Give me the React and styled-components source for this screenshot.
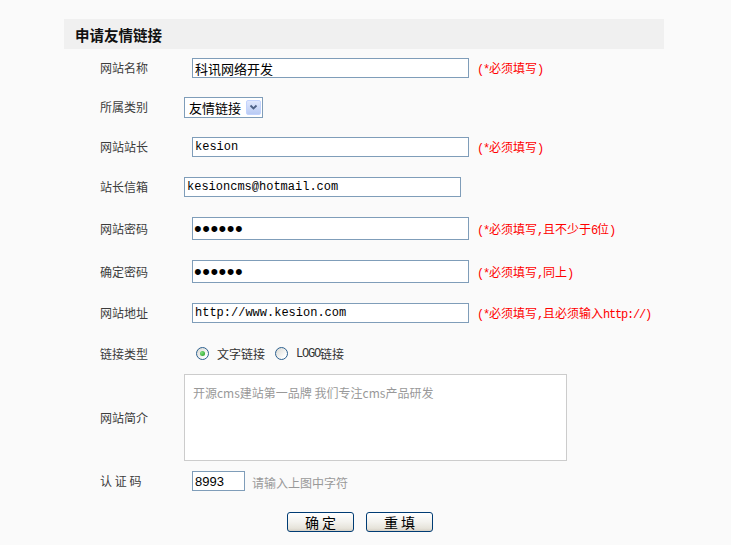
import React from "react";
import styled, { createGlobalStyle } from "styled-components";

const CJK = `"Noto Sans CJK SC", sans-serif`;
const SONG = `"Liberation Mono", "Noto Sans CJK SC", monospace`;

const GlobalStyle = createGlobalStyle`
  html, body {
    margin: 0;
    padding: 0;
    background: #fafafa;
  }
  body {
    font-family: ${CJK};
    font-size: 12px;
    color: #333;
  }
  * { box-sizing: border-box; }
`;

const Page = styled.div`
  padding: 19px 0 0 64px;
  min-height: 545px;
`;

const Panel = styled.div`
  width: 600px;
`;

const Header = styled.div`
  height: 30px;
  background: #f0f0f0;
  display: flex;
  align-items: center;
  padding-left: 11px;
  font-family: ${CJK};
  font-size: 14.5px;
  font-weight: bold;
  color: #111;
`;

const Form = styled.form`
  display: flex;
  flex-direction: column;
`;

const Row = styled.div`
  display: grid;
  grid-template-columns: 120px 1fr;
  align-items: center;
  min-height: ${(p) => p.$h || 40}px;
`;

const Label = styled.div`
  padding-left: 36px;
  font-family: ${CJK};
  font-size: 12px;
  line-height: 14px;
  color: #3c3c3c;
  white-space: pre;
`;

const Field = styled.div`
  display: flex;
  align-items: center;
`;

const TextInput = styled.input`
  width: ${(p) => p.$w || 277}px;
  height: ${(p) => p.$hgt || 20}px;
  margin: 0 0 0 ${(p) => (p.$indent ? 8 : 0)}px;
  padding: 0 2px;
  border: 1px solid #7f9db9;
  background: #fff;
  color: #000;
  font-family: ${(p) =>
    p.$mono ? SONG : p.$sans ? `"Liberation Sans", sans-serif` : CJK};
  font-size: ${(p) => p.$fs || 12}px;
  outline: none;
`;

const PasswordInput = styled(TextInput)`
  font-family: "Liberation Sans", sans-serif;
  font-size: 22px;
  padding: 0 1px;
  letter-spacing: 0.5px;
`;

const Hint = styled.span`
  margin-left: ${(p) => p.$ml ?? 8}px;
  padding-top: ${(p) => (p.$gray ? 3 : 2)}px;
  font-family: ${CJK};
  font-size: 12px;
  line-height: 14px;
  color: ${(p) => (p.$gray ? "#999" : "#f00")};
  white-space: nowrap;
`;

const Latin = styled.span`
  font-family: "Liberation Mono", monospace;
  font-size: 12px;
  letter-spacing: -1.2px;
`;

const SelectBox = styled.div`
  width: 79px;
  height: 21px;
  border: 1px solid #7f9db9;
  background: #fff;
  display: flex;
  align-items: center;
  justify-content: space-between;
  padding: 0 1px 0 4px;
  font-family: ${CJK};
  font-size: 13px;
  color: #000;
`;

const ArrowBtn = styled.span`
  width: 15px;
  height: 15px;
  border: 1px solid #c3d3fd;
  border-radius: 2px;
  background: linear-gradient(#e0e8fe, #b9cbf4);
  display: flex;
  align-items: center;
  justify-content: center;
`;

const RadioGroup = styled.div`
  display: flex;
  align-items: center;
  padding-left: 12px;
`;

const RadioItem = styled.label`
  display: flex;
  align-items: center;
  margin-right: 10px;
  font-family: ${CJK};
  font-size: 12px;
  line-height: 14px;
  color: #333;
`;

const RadioCircle = styled.span`
  width: 13px;
  height: 13px;
  border-radius: 50%;
  border: 1px solid #2b5f8f;
  background: linear-gradient(135deg, #d8d8d2, #ffffff 80%);
  display: flex;
  align-items: center;
  justify-content: center;
  margin-right: 8px;
`;

const RadioDot = styled.span`
  width: 5px;
  height: 5px;
  border-radius: 50%;
  background: radial-gradient(circle at 35% 35%, #7fe07f, #1c9a1c);
`;

const TextArea = styled.textarea`
  width: 383px;
  height: 87px;
  border: 1px solid #ccc;
  background: #fff;
  padding: 11px 8px;
  resize: none;
  font-family: ${CJK};
  font-size: 12px;
  line-height: 14px;
  color: #999;
  outline: none;
  &::placeholder {
    color: #999;
  }
`;

const Buttons = styled.div`
  display: flex;
  align-items: center;
  gap: 12px;
  padding-left: 223px;
  height: 41px;
`;

const Button = styled.button`
  width: 67px;
  height: 20px;
  padding: 0;
  border: 1px solid #003c74;
  border-radius: 3px;
  background: linear-gradient(#ffffff, #f3f2ee 50%, #e6e3da 85%, #d6d0c5);
  font-family: ${CJK};
  font-size: 14px;
  line-height: 16px;
  color: #000;
  white-space: pre;
  cursor: pointer;
`;

function Radio({ checked, children }) {
  return (
    <RadioItem>
      <RadioCircle>{checked && <RadioDot />}</RadioCircle>
      {children}
    </RadioItem>
  );
}

export default function App() {
  return (
    <>
      <GlobalStyle />
      <Page>
        <Panel>
          <Header>申请友情链接</Header>
          <Form onSubmit={(e) => e.preventDefault()}>
            <Row $h={38}>
              <Label>网站名称</Label>
              <Field>
                <TextInput $indent $fs={13} defaultValue="科讯网络开发" />
                <Hint><Latin>(*</Latin>必须填写<Latin>)</Latin></Hint>
              </Field>
            </Row>
            <Row>
              <Label>所属类别</Label>
              <Field>
                <SelectBox>
                  <span>友情链接</span>
                  <ArrowBtn>
                    <svg width="9" height="7" viewBox="0 0 9 7">
                      <path
                        d="M1.5 1.5 L4.5 4.5 L7.5 1.5"
                        fill="none"
                        stroke="#4d6185"
                        strokeWidth="1.8"
                      />
                    </svg>
                  </ArrowBtn>
                </SelectBox>
              </Field>
            </Row>
            <Row>
              <Label>网站站长</Label>
              <Field>
                <TextInput $indent $mono defaultValue="kesion" />
                <Hint><Latin>(*</Latin>必须填写<Latin>)</Latin></Hint>
              </Field>
            </Row>
            <Row>
              <Label>站长信箱</Label>
              <Field>
                <TextInput $mono defaultValue="kesioncms@hotmail.com" />
              </Field>
            </Row>
            <Row $h={43}>
              <Label>网站密码</Label>
              <Field>
                <PasswordInput type="password" $indent $hgt={23} defaultValue="123456" />
                <Hint><Latin>(*</Latin>必须填写<Latin>,</Latin>且不少于<Latin>6</Latin>位<Latin>)</Latin></Hint>
              </Field>
            </Row>
            <Row $h={43}>
              <Label>确定密码</Label>
              <Field>
                <PasswordInput type="password" $indent $hgt={23} defaultValue="123456" />
                <Hint><Latin>(*</Latin>必须填写<Latin>,</Latin>同上<Latin>)</Latin></Hint>
              </Field>
            </Row>
            <Row>
              <Label>网站地址</Label>
              <Field>
                <TextInput $indent $mono defaultValue="http://www.kesion.com" />
                <Hint><Latin>(*</Latin>必须填写<Latin>,</Latin>且必须输入<Latin>http://)</Latin></Hint>
              </Field>
            </Row>
            <Row $h={41}>
              <Label>链接类型</Label>
              <RadioGroup>
                <Radio checked>文字链接</Radio>
                <Radio><Latin>LOGO</Latin>链接</Radio>
              </RadioGroup>
            </Row>
            <Row>
              <Label>网站简介</Label>
              <Field>
                <TextArea placeholder="开源cms建站第一品牌 我们专注cms产品研发" />
              </Field>
            </Row>
            <Row>
              <Label>{"认 证 码"}</Label>
              <Field>
                <TextInput $indent $sans $w={53} $fs={13} defaultValue="8993" />
                <Hint $gray $ml={7}>请输入上图中字符</Hint>
              </Field>
            </Row>
            <Buttons>
              <Button type="submit">{"确 定"}</Button>
              <Button type="reset">{"重 填"}</Button>
            </Buttons>
          </Form>
        </Panel>
      </Page>
    </>
  );
}
